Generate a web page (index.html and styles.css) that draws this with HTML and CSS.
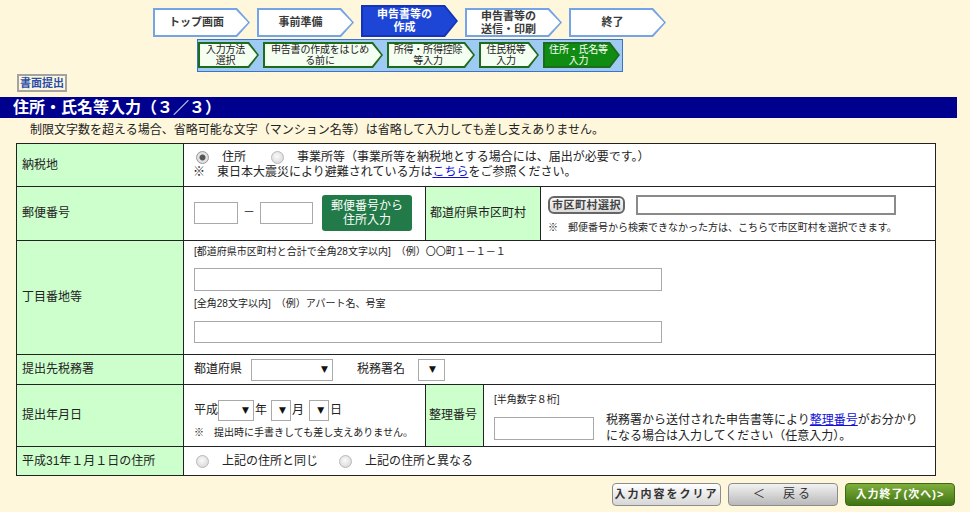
FILE: index.html
```html
<!DOCTYPE html>
<html lang="ja">
<head>
<meta charset="utf-8">
<title>住所・氏名等入力</title>
<link rel="stylesheet" href="styles.css">
</head>
<body>
<div class="page">
  <div class="steps">
    <div class="step"><div class="step-in">トップ画面</div></div>
    <div class="step"><div class="step-in">事前準備</div></div>
    <div class="step active"><div class="step-in">申告書等の<br>作成</div></div>
    <div class="step"><div class="step-in">申告書等の<br>送信・印刷</div></div>
    <div class="step"><div class="step-in">終了</div></div>
  </div>
  <div class="subbar">
    <div class="sub s1"><div class="sub-in">入力方法<br>選択</div></div>
    <div class="sub s2"><div class="sub-in">申告書の作成をはじめ<br>る前に</div></div>
    <div class="sub s3"><div class="sub-in">所得・所得控除<br>等入力</div></div>
    <div class="sub s4"><div class="sub-in">住民税等<br>入力</div></div>
    <div class="sub s5 active"><div class="sub-in">住所・氏名等<br>入力</div></div>
  </div>
  <div class="paper"><a class="paper-btn">書面提出</a></div>
  <h1 class="title">住所・氏名等入力（３／３）</h1>
  <p class="note">制限文字数を超える場合、省略可能な文字（マンション名等）は省略して入力しても差し支えありません。</p>

  <div class="form">
    <div class="row r1">
      <div class="lab">納税地</div>
      <div class="cell c1">
        <div class="line"><span class="rd on"></span><span class="rl">住所</span><span class="rd"></span><span class="rl">事業所等（事業所等を納税地とする場合には、届出が必要です。）</span></div>
        <div class="line">※　東日本大震災により避難されている方は<a class="lnk">こちら</a>をご参照ください。</div>
      </div>
    </div>
    <div class="row r2">
      <div class="lab">郵便番号</div>
      <div class="cell c2">
        <span class="inp zip1"></span><span class="dash">－</span><span class="inp zip2"></span>
        <span class="zipbtn">郵便番号から<br>住所入力</span>
      </div>
      <div class="lab lab2">都道府県市区町村</div>
      <div class="cell c2r">
        <div class="line2"><span class="cbtn">市区町村選択</span><span class="inp city"></span></div>
        <div class="small n2">※　郵便番号から検索できなかった方は、こちらで市区町村を選択できます。</div>
      </div>
    </div>
    <div class="row r3">
      <div class="lab">丁目番地等</div>
      <div class="cell c3">
        <div class="small">[都道府県市区町村と合計で全角28文字以内]　（例）〇〇町１－１－１</div>
        <span class="inp addr a1"></span>
        <div class="small s2t">[全角28文字以内]　（例）アパート名、号室</div>
        <span class="inp addr a2"></span>
      </div>
    </div>
    <div class="row r4">
      <div class="lab">提出先税務署</div>
      <div class="cell c4">
        <span>都道府県</span><span class="sel pref">▼</span>
        <span class="office">税務署名</span><span class="sel tax">▼</span>
      </div>
    </div>
    <div class="row r5">
      <div class="lab">提出年月日</div>
      <div class="cell c5">
        <div class="date"><span>平成</span><span class="sel yy">▼</span><span class="u">年</span><span class="sel mm">▼</span><span class="u">月</span><span class="sel dd">▼</span><span class="u">日</span></div>
        <div class="small n5">※　提出時に手書きしても差し支えありません。</div>
      </div>
      <div class="lab lab5">整理番号</div>
      <div class="cell c5r">
        <div class="small">[半角数字８桁]</div>
        <div class="seiri"><span class="inp num"></span><p class="expl">税務署から送付された申告書等により<a class="lnk">整理番号</a>がお分かり<br>になる場合は入力してください（任意入力）。</p></div>
      </div>
    </div>
    <div class="row r6">
      <div class="lab">平成31年１月１日の住所</div>
      <div class="cell c6">
        <span class="rd"></span><span class="rl">上記の住所と同じ</span><span class="rd rd2"></span><span class="rl">上記の住所と異なる</span>
      </div>
    </div>
  </div>

  <div class="btns">
    <span class="btn clear">入力内容をクリア</span>
    <span class="btn back">＜　戻る</span>
    <span class="btn next">入力終了(次へ)&gt;</span>
  </div>
</div>
</body>
</html>
```

FILE: styles.css
```css
* { box-sizing: border-box; margin: 0; padding: 0; }
body {
  background: #fef7dc;
  font-family: "Liberation Sans", "Noto Sans CJK JP", sans-serif;
  font-size: 12px;
  line-height: 15px;
  color: #222;
  width: 970px;
  height: 512px;
  overflow: hidden;
}
.page { width: 957px; }

/* main steps */
.steps { display: flex; gap: 7px; padding: 8px 0 0 153px; height: 37px; }
.step {
  width: 97px; height: 29px; padding: 2px;
  background: #74a3e6;
  clip-path: polygon(0 0, calc(100% - 13px) 0, 100% 50%, calc(100% - 13px) 100%, 0 100%);
}
.step-in {
  height: 100%;
  background: #fff;
  clip-path: polygon(0 0, calc(100% - 12px) 0, 100% 50%, calc(100% - 12px) 100%, 0 100%);
  display: flex; align-items: center; justify-content: center;
  padding-right: 10px;
  font-size: 11px; line-height: 12.6px; font-weight: bold; color: #3a3a3a; text-align: center;
  white-space: nowrap;
}
.step.active { background: #1434b8; height: 32px; margin-top: -3px; }
.step.active .step-in { background: #1e46d6; color: #fff; }

/* sub steps */
.subbar {
  margin: 2px 0 0 197px; width: 426px; height: 33px;
  background: #9ecaf3; border: 1px solid #3c72c8;
  display: flex; gap: 4px; padding-top: 2px;
}
.sub {
  height: 26px; padding: 2px; background: #1d6b1d;
  clip-path: polygon(0 0, calc(100% - 10px) 0, 100% 50%, calc(100% - 10px) 100%, 0 100%);
}
.sub-in {
  height: 100%; background: #f4fff1;
  clip-path: polygon(0 0, calc(100% - 9px) 0, 100% 50%, calc(100% - 9px) 100%, 0 100%);
  display: flex; align-items: center; justify-content: center;
  padding-right: 6px;
  font-size: 10px; line-height: 11.5px; color: #222; text-align: center;
  white-space: nowrap; letter-spacing: -0.2px;
}
.s1 { width: 61px; }
.s2 { width: 120px; }
.s3 { width: 88px; }
.s4 { width: 60px; }
.s5 { width: 77px; }
.sub.active .sub-in { background: #118c13; color: #fff; }

/* paper button */
.paper { padding: 2px 0 0 17px; height: 20px; }
.paper-btn {
  display: inline-flex; align-items: center; justify-content: center;
  width: 50px; height: 18px;
  border: 2px solid #a3a3a3;
  color: #2a4dac; font-weight: bold; font-size: 11px; line-height: 13px;
  white-space: nowrap;
}

.title {
  margin-top: 5px; height: 21px;
  background: #00008f; color: #fff;
  font-size: 16px; line-height: 21px; font-weight: bold;
  padding-left: 13px;
}
.note { height: 25px; line-height: 25px; padding-left: 30px; font-size: 12px; }

/* form table */
.form { margin-left: 16px; width: 920px; border: 1px solid #222; border-bottom: 0; }
.row { display: flex; border-bottom: 1px solid #222; }
.r1 { height: 43px; }
.r2 { height: 54px; }
.r3 { height: 114px; }
.r4 { height: 30px; }
.r5 { height: 62px; }
.r6 { height: 29px; }
.lab {
  width: 167px; flex: none;
  background: #ccffcc; border-right: 1px solid #222;
  display: flex; align-items: center; padding-left: 5px;
}
.cell { background: #fff; }
.lnk { color: #1010d8; text-decoration: underline; }
.small { font-size: 10px; line-height: 14px; }

.inp { display: block; flex: none; background: #fff; border: 1px solid #a9a9a9; }

/* radio */
.rd {
  display: inline-block; flex: none;
  width: 13px; height: 13px; border-radius: 50%;
  border: 1px solid #b8b8b8;
  background: radial-gradient(circle at 45% 40%, #fafafa, #d2d2d2);
}
.rd.on { background: radial-gradient(circle, #555 0 2.5px, #e6e6e6 3.5px, #cfcfcf 100%); border-color: #999; }

/* row 1 */
.c1 { flex: 1; padding: 6px 0 0 9px; }
.c1 .line { display: flex; align-items: center; height: 15px; }
.c1 .rd { margin-left: 3px; margin-right: 13px; }
.c1 .rl:nth-child(2) { margin-right: 22px; }
.c1 .line + .line { display: block; }

/* row 2 */
.c2 { width: 242px; flex: none; border-right: 1px solid #222; display: flex; align-items: center; padding: 0 0 2px 10px; }
.zip1 { width: 44px; height: 22px; }
.zip2 { width: 53px; height: 22px; }
.dash { width: 22px; text-align: center; }
.zipbtn {
  margin-left: 9px; width: 90px; height: 36px;
  background: #217a47; border-radius: 3px; color: #fff;
  display: flex; align-items: center; justify-content: center; text-align: center;
  font-size: 12px; line-height: 14px;
}
.lab2 { width: 115px; padding-left: 4px; }
.c2r { flex: 1; padding: 8px 0 0 7px; }
.line2 { display: flex; align-items: center; height: 20px; }
.cbtn {
  width: 77px; height: 18px; border: 2px solid #666; border-radius: 6px;
  background: linear-gradient(#fafafa, #dcdcdc);
  font-size: 11px; font-weight: bold; line-height: 13px; color: #444;
  display: flex; align-items: center; justify-content: center; letter-spacing: 0.5px;
}
.city { margin-left: 11px; width: 260px; height: 20px; border: 2px solid #8a8a8a; }
.n2 { margin-top: 6px; }

/* row 3 */
.c3 { flex: 1; padding: 4px 0 0 10px; }
.addr { width: 468px; }
.a1 { height: 23px; margin-top: 9px; }
.s2t { margin-top: 6px; }
.a2 { height: 22px; margin-top: 10px; }

/* selects */
.sel {
  display: inline-flex; justify-content: flex-end; align-items: center;
  height: 22px; border: 1px solid #a9a9a9; background: #fff;
  font-family: "DejaVu Sans", sans-serif;
  font-size: 9px; line-height: 11px; padding-right: 4px; color: #111; flex: none;
}

/* row 4 */
.c4 { flex: 1; display: flex; align-items: center; padding-left: 10px; }
.pref { width: 82px; margin-left: 9px; }
.office { margin-left: 24px; }
.tax { width: 27px; margin-left: 13px; padding-right: 8px; }

/* row 5 */
.c5 { width: 242px; flex: none; border-right: 1px solid #222; padding: 14px 0 0 10px; }
.date { display: flex; align-items: center; height: 22px; }
.yy { width: 36px; height: 21px; }
.mm { width: 20px; height: 21px; margin-left: 4px; padding-right: 4px; }
.dd { width: 20px; height: 21px; margin-left: 5px; padding-right: 4px; }
.u { margin-left: 1px; }
.n5 { margin-top: 5px; }
.lab5 { width: 58px; padding-left: 3px; }
.c5r { flex: 1; padding: 8px 0 0 10px; }
.seiri { display: flex; align-items: center; margin-top: 5px; }
.num { width: 100px; height: 23px; }
.expl { margin-left: 12px; line-height: 16px; }

/* row 6 */
.c6 { flex: 1; display: flex; align-items: center; padding-left: 12px; }
.c6 .rl { margin-left: 13px; }
.rd2 { margin-left: 21px; }

/* buttons */
.btns { display: flex; justify-content: flex-end; gap: 7px; margin-top: 7px; padding-right: 2px; }
.btn {
  display: flex; align-items: center; justify-content: center;
  width: 110px; height: 23px; border-radius: 4px;
  border: 1px solid #8c8c8c;
  background: linear-gradient(#ffffff, #d6d6d6);
  font-size: 11px; font-weight: bold; color: #333; letter-spacing: 2px;
}
.clear { width: 109px; }
.back { background: linear-gradient(#f2f2f2, #b9b9b9); font-weight: normal; font-size: 12px; letter-spacing: 3px; }
.next { background: linear-gradient(#7fae3c, #3f7412); border-color: #3b6a12; color: #fff; letter-spacing: 1px; }
```
